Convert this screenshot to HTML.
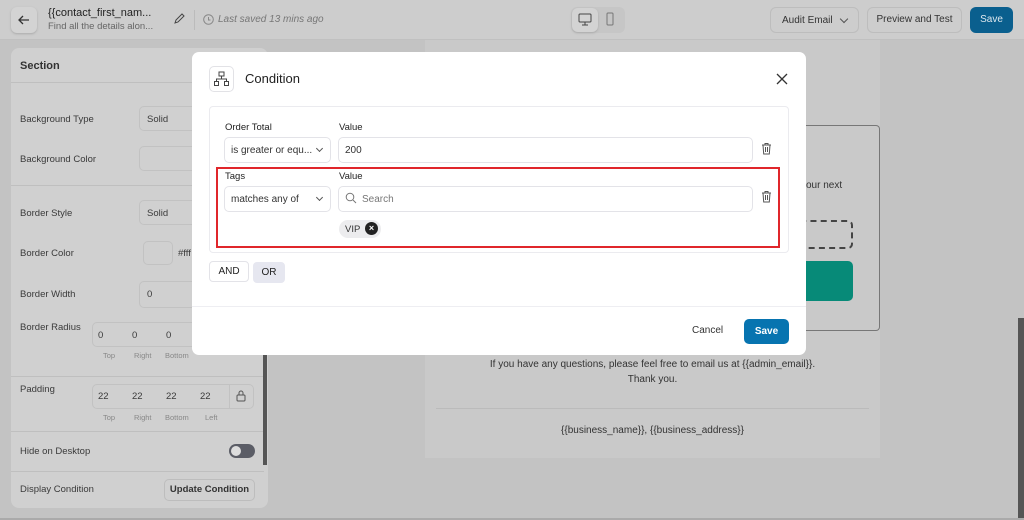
<!DOCTYPE html>
<html><head><meta charset="utf-8"><style>
*{box-sizing:border-box;margin:0;padding:0}
body{width:1024px;height:520px;overflow:hidden;background:#c3c3c3;font-family:"Liberation Sans",sans-serif;position:relative;color:#333}
.a{position:absolute}
.t{font-size:9.5px;color:#3a3a3a}
.inp{position:absolute;border:1px solid #c2c2c2;border-radius:5px;background:#d0d0d0}
.m{position:absolute;background:#fff;border:1px solid #e3e3e8;border-radius:5px;font-size:10px;color:#333}
</style></head><body>
<div class="a" style="left:0;top:0;width:1024px;height:40px;background:#cdcdcd;border-bottom:1px solid #c0c0c0"></div>
<div class="a" style="left:11px;top:7px;width:26px;height:26px;border-radius:6px;background:#d3d3d3;box-shadow:0 1px 2px #aaa"></div>
<svg class="a" style="left:17px;top:13px" width="14" height="14" viewBox="0 0 14 14"><path d="M12 7H2M6 3L2 7l4 4" stroke="#333" stroke-width="1.3" fill="none"/></svg>
<div class="a" style="left:48px;top:7px;font-size:11px;color:#222">{{contact_first_nam...</div>
<div class="a" style="left:48px;top:21px;font-size:9.5px;color:#666">Find all the details alon...</div>
<svg class="a" style="left:173px;top:13px" width="12" height="12" viewBox="0 0 12 12"><path d="M2 10l1-3 6-6 2 2-6 6z" stroke="#444" fill="none"/></svg>
<div class="a" style="left:194px;top:10px;width:1px;height:20px;background:#bbb"></div>
<svg class="a" style="left:203px;top:14px" width="11" height="11" viewBox="0 0 11 11"><circle cx="5.5" cy="5.5" r="4.8" stroke="#888" fill="none"/><path d="M5.5 3v3h2" stroke="#888" fill="none"/></svg>
<div class="a" style="left:218px;top:14px;font-size:10px;color:#777;font-style:italic">Last saved 13 mins ago</div>
<div class="a" style="left:571px;top:7px;width:54px;height:26px;border-radius:6px;background:#c6c6c6"></div>
<div class="a" style="left:572px;top:8px;width:26px;height:24px;border-radius:6px;background:#d3d3d3;box-shadow:0 1px 2px #aaa"></div>
<svg class="a" style="left:578px;top:13px" width="14" height="13" viewBox="0 0 14 13"><rect x="1" y="1" width="12" height="8" rx="1" stroke="#444" fill="none"/><path d="M7 9v3M4 12h6" stroke="#444"/></svg>
<svg class="a" style="left:606px;top:12px" width="8" height="14" viewBox="0 0 8 14"><rect x="1" y="1" width="6" height="12" rx="1" stroke="#777" fill="none"/></svg>
<div class="a" style="left:770px;top:7px;width:89px;height:26px;border:1px solid #bdbdbd;border-radius:6px;font-size:10px;color:#333;padding:7px 0 0 11px">Audit Email <span style="display:inline-block;width:6px;height:6px;border-right:1px solid #555;border-bottom:1px solid #555;transform:rotate(45deg);margin:-3px 0 0 6px;vertical-align:middle"></span></div>
<div class="a" style="left:867px;top:7px;width:95px;height:26px;border:1px solid #bdbdbd;border-radius:6px;font-size:10px;color:#333;text-align:center;line-height:24px">Preview and Test</div>
<div class="a" style="left:970px;top:7px;width:43px;height:26px;background:#0a5f8e;border-radius:6px;font-size:10px;color:#dfe8ee;text-align:center;line-height:26px">Save</div>
<div class="a" style="left:11px;top:48px;width:257px;height:460px;background:#d0d0d0;border-radius:8px"></div>
<div class="a" style="left:11px;top:82px;width:257px;height:1px;background:#bfbfbf"></div>
<div class="a" style="left:20px;top:60px;font-size:11px;color:#333;font-weight:bold">Section</div>
<div class="a t" style="left:20px;top:114px">Background Type</div>
<div class="inp" style="left:139px;top:106px;width:60px;height:25px"></div><div class="a t" style="left:147px;top:114px">Solid</div>
<div class="a t" style="left:20px;top:154px">Background Color</div>
<div class="inp" style="left:139px;top:146px;width:60px;height:25px"></div>
<div class="a" style="left:11px;top:185px;width:257px;height:1px;background:#bfbfbf"></div>
<div class="a t" style="left:20px;top:208px">Border Style</div>
<div class="inp" style="left:139px;top:200px;width:60px;height:25px"></div><div class="a t" style="left:147px;top:208px">Solid</div>
<div class="a t" style="left:20px;top:248px">Border Color</div>
<div class="inp" style="left:143px;top:241px;width:30px;height:24px"></div><div class="a t" style="left:178px;top:248px">#fff</div>
<div class="a t" style="left:20px;top:289px">Border Width</div>
<div class="inp" style="left:139px;top:281px;width:60px;height:27px"></div><div class="a t" style="left:147px;top:289px">0</div>
<div class="a t" style="left:20px;top:322px">Border Radius</div>
<div class="inp" style="left:92px;top:322px;width:110px;height:25px"></div>
<div class="a t" style="left:98px;top:330px">0</div><div class="a t" style="left:132px;top:330px">0</div><div class="a t" style="left:166px;top:330px">0</div>
<div class="a" style="left:103px;top:351px;font-size:7.5px;color:#888">Top</div><div class="a" style="left:134px;top:351px;font-size:7.5px;color:#888">Right</div><div class="a" style="left:165px;top:351px;font-size:7.5px;color:#888">Bottom</div>
<div class="a" style="left:11px;top:376px;width:253px;height:1px;background:#bfbfbf"></div>
<div class="a t" style="left:20px;top:384px">Padding</div>
<div class="inp" style="left:92px;top:384px;width:162px;height:25px"></div>
<div class="a t" style="left:98px;top:391px">22</div><div class="a t" style="left:132px;top:391px">22</div><div class="a t" style="left:166px;top:391px">22</div><div class="a t" style="left:200px;top:391px">22</div>
<div class="a" style="left:229px;top:384px;width:1px;height:25px;background:#c2c2c2"></div>
<svg class="a" style="left:236px;top:390px" width="10" height="12" viewBox="0 0 10 12"><rect x="1" y="5" width="8" height="6" rx="1" stroke="#555" fill="none"/><path d="M3 5V3a2 2 0 0 1 4 0v2" stroke="#555" fill="none"/></svg>
<div class="a" style="left:103px;top:413px;font-size:7.5px;color:#888">Top</div><div class="a" style="left:134px;top:413px;font-size:7.5px;color:#888">Right</div><div class="a" style="left:165px;top:413px;font-size:7.5px;color:#888">Bottom</div><div class="a" style="left:205px;top:413px;font-size:7.5px;color:#888">Left</div>
<div class="a" style="left:11px;top:431px;width:253px;height:1px;background:#bfbfbf"></div>
<div class="a t" style="left:20px;top:446px">Hide on Desktop</div>
<div class="a" style="left:229px;top:444px;width:26px;height:14px;border-radius:7px;background:#5b5d66"></div>
<div class="a" style="left:231px;top:446px;width:10px;height:10px;border-radius:5px;background:#ddd"></div>
<div class="a" style="left:11px;top:471px;width:253px;height:1px;background:#bfbfbf"></div>
<div class="a t" style="left:20px;top:484px">Display Condition</div>
<div class="a" style="left:164px;top:479px;width:91px;height:22px;border:1px solid #bdbdbd;border-radius:5px;font-size:9.5px;color:#333;text-align:center;line-height:20px;font-weight:bold">Update Condition</div>
<div class="a" style="left:263px;top:95px;width:4px;height:370px;background:#555"></div>
<div class="a" style="left:425px;top:40px;width:455px;height:418px;background:#c9c9c9"></div>
<div class="a" style="left:780px;top:125px;width:100px;height:206px;border:1.5px solid #777;border-left:none;border-radius:0 4px 4px 0"></div>
<div class="a" style="left:806px;top:180px;font-size:10px;color:#333">our next</div>
<div class="a" style="left:790px;top:220px;width:63px;height:29px;border:2px dashed #444;border-left:none;border-radius:0 5px 5px 0"></div>
<div class="a" style="left:790px;top:261px;width:63px;height:40px;background:#078a78;border-radius:0 5px 5px 0"></div>
<div class="a" style="left:425px;top:357px;width:455px;text-align:center;font-size:10px;color:#333;line-height:15px">If you have any questions, please feel free to email us at {{admin_email}}.<br>Thank you.</div>
<div class="a" style="left:436px;top:408px;width:433px;height:1px;background:#bbb"></div>
<div class="a" style="left:425px;top:425px;width:455px;text-align:center;font-size:10px;color:#333">{{business_name}}, {{business_address}}</div>
<div class="a" style="left:1018px;top:318px;width:6px;height:202px;background:#555"></div>
<div class="a" style="left:0;top:518px;width:1024px;height:2px;background:#aaa"></div>
<div class="a" style="left:192px;top:52px;width:614px;height:303px;background:#fff;border-radius:7px"></div>
<div class="a" style="left:209px;top:66px;width:25px;height:26px;border:1px solid #e2e2e6;border-radius:5px"></div>
<svg class="a" style="left:213px;top:71px" width="17" height="16" viewBox="0 0 17 16"><rect x="6" y="1" width="5" height="4" stroke="#444" fill="none"/><rect x="1.5" y="10.5" width="4" height="4" stroke="#444" fill="none"/><rect x="11.5" y="10.5" width="4" height="4" stroke="#444" fill="none"/><path d="M8.5 5v3M3.5 10.5V8h10v2.5" stroke="#444" fill="none"/></svg>
<div class="a" style="left:245px;top:71px;font-size:13px;color:#222">Condition</div>
<svg class="a" style="left:776px;top:73px" width="12" height="12" viewBox="0 0 12 12"><path d="M1 1l10 10M11 1L1 11" stroke="#333" stroke-width="1.3"/></svg>
<div class="a" style="left:209px;top:106px;width:580px;height:147px;border:1px solid #ebebef;border-radius:4px"></div>
<div class="a" style="left:225px;top:122px;font-size:9.5px;color:#222">Order Total</div>
<div class="a" style="left:339px;top:122px;font-size:9.5px;color:#222">Value</div>
<div class="m" style="left:224px;top:137px;width:107px;height:26px;padding:7px 0 0 6px">is greater or equ...</div>
<div class="a" style="left:317px;top:146px;width:5px;height:5px;border-right:1px solid #555;border-bottom:1px solid #555;transform:rotate(45deg)"></div>
<div class="m" style="left:338px;top:137px;width:415px;height:26px;padding:7px 0 0 6px">200</div>
<svg class="a" style="left:761px;top:142px" width="11" height="13" viewBox="0 0 11 13"><path d="M1 3h9M4 3V1.5h3V3M2 3l.7 9h5.6L9 3M4.5 5v5M6.5 5v5" stroke="#555" fill="none"/></svg>
<div class="a" style="left:216px;top:167px;width:564px;height:81px;border:2px solid #e0262b"></div>
<div class="a" style="left:225px;top:171px;font-size:9.5px;color:#222">Tags</div>
<div class="a" style="left:339px;top:171px;font-size:9.5px;color:#222">Value</div>
<div class="m" style="left:224px;top:186px;width:107px;height:26px;padding:7px 0 0 6px">matches any of</div>
<div class="a" style="left:317px;top:195px;width:5px;height:5px;border-right:1px solid #555;border-bottom:1px solid #555;transform:rotate(45deg)"></div>
<div class="m" style="left:338px;top:186px;width:415px;height:26px;padding:7px 0 0 23px;color:#777">Search</div>
<svg class="a" style="left:345px;top:192px" width="12" height="12" viewBox="0 0 12 12"><circle cx="5" cy="5" r="3.8" stroke="#777" fill="none"/><path d="M8 8l3 3" stroke="#777"/></svg>
<svg class="a" style="left:761px;top:190px" width="11" height="13" viewBox="0 0 11 13"><path d="M1 3h9M4 3V1.5h3V3M2 3l.7 9h5.6L9 3M4.5 5v5M6.5 5v5" stroke="#555" fill="none"/></svg>
<div class="a" style="left:339px;top:220px;width:42px;height:18px;border-radius:9px;background:#ececee;font-size:9.5px;color:#333;padding:4px 0 0 6px">VIP</div>
<div class="a" style="left:365px;top:222px;width:13px;height:13px;border-radius:7px;background:#222;color:#fff;font-size:9px;font-weight:bold;text-align:center;line-height:13px">×</div>
<div class="a" style="left:209px;top:261px;width:40px;height:21px;border:1px solid #e3e3e8;border-radius:4px;font-size:10px;color:#222;text-align:center;line-height:19px">AND</div>
<div class="a" style="left:253px;top:262px;width:32px;height:21px;background:#e6e7f0;border-radius:4px;font-size:10px;color:#222;text-align:center;line-height:21px">OR</div>
<div class="a" style="left:192px;top:306px;width:614px;height:1px;background:#eeeef2"></div>
<div class="a" style="left:692px;top:325px;font-size:10px;color:#333">Cancel</div>
<div class="a" style="left:744px;top:319px;width:45px;height:25px;background:#0774b0;border-radius:5px;font-size:10px;font-weight:bold;color:#fff;text-align:center;line-height:25px">Save</div>
</body></html>
